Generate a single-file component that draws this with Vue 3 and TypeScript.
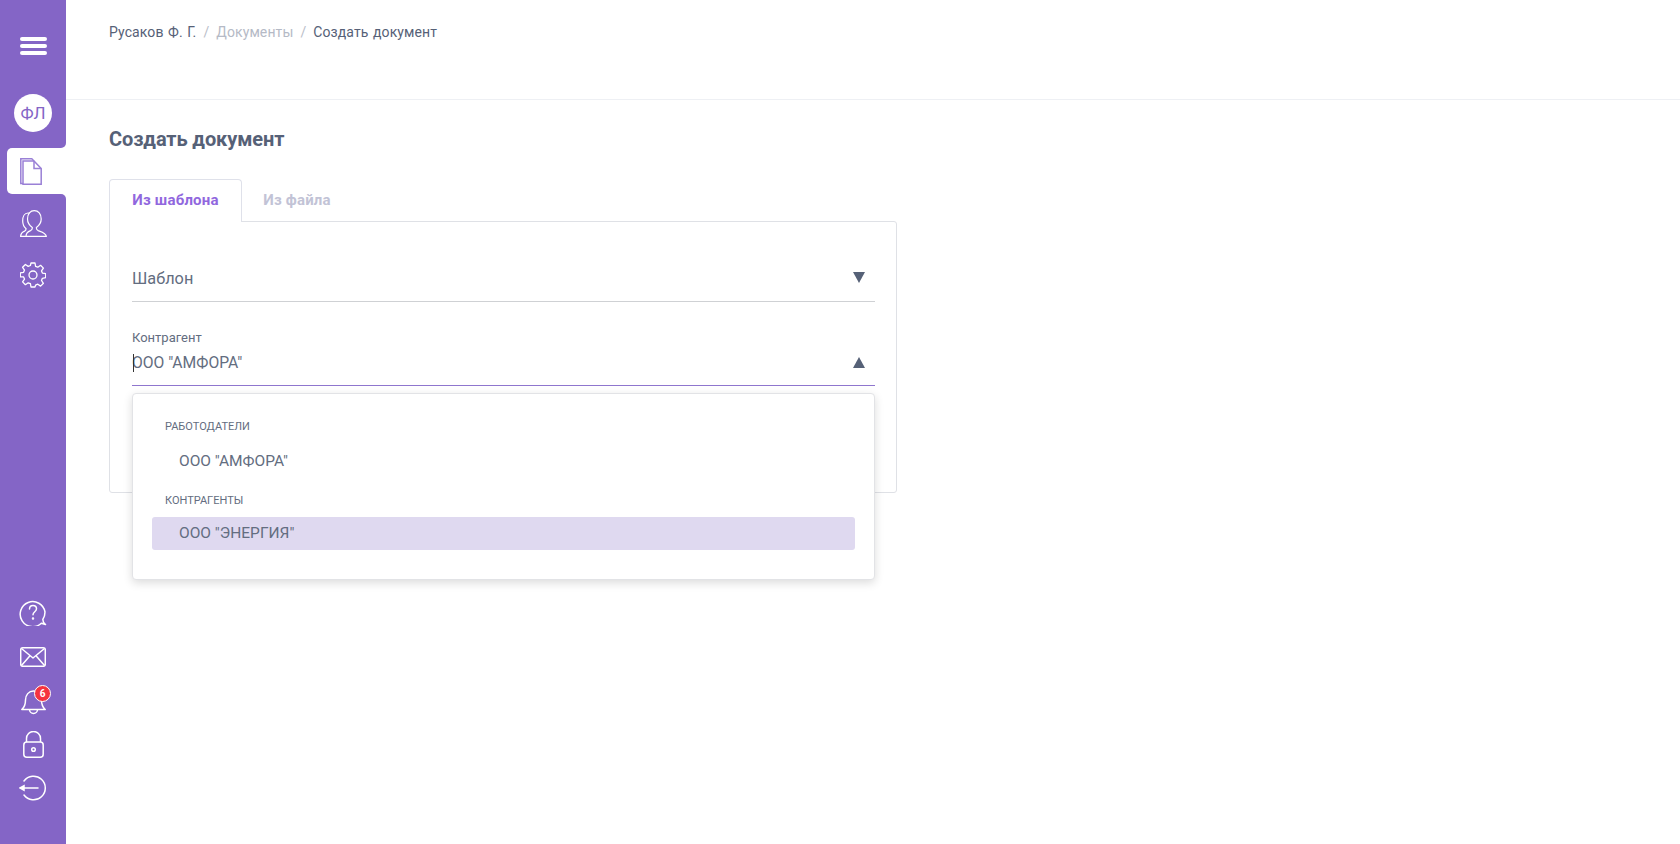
<script setup lang="ts">
const crumbs = [
  { text: 'Русаков Ф. Г.', cls: 'c-dark' },
  { text: 'Документы', cls: 'c-muted' },
  { text: 'Создать документ', cls: 'c-dark' },
]
</script>

<template>
  <div class="page">
    <aside class="side">
      <div class="side-top">
        <div class="burger"><span></span><span></span><span></span></div>
        <div class="avatar">ФЛ</div>
      </div>
      <div class="active-item">
        <svg width="22" height="27" viewBox="0 0 22 27" fill="none" stroke="#9a80d6" stroke-width="1.500">
          <path d="M3 25.400H.8V.8h11l2.200 2.200" />
          <path d="M3 3h11l7.200 7.500v15.700H3z" fill="#fff" />
          <path d="M14 3v7.500h7.200" />
        </svg>
      </div>
      <div class="side-mid">
        <button class="ico">
          <svg width="27" height="27" viewBox="0 0 27 27" fill="none" stroke="#fff" stroke-width="1.200" stroke-linejoin="round">
            <path d="M6 26.400H.6c.2-3 1.800-4.500 4-5.300 1.200-.5 1.500-1.200 1.500-2.300C4 17 2.700 14.500 2.700 11 2.700 6.500 4.500 3 8 3c.5 0 1 .1 1.500.3" />
            <path d="M6 26.400c0-3 1.800-4.800 4.500-5.800 1.500-.6 2-1.700 1.800-3.100C9.500 15.500 7.500 13 7.500 9 7.500 4 10.300.7 14.300.7S21.200 4 21.200 9c0 4-2 6.500-4.800 8.500-.2 1.400.3 2.500 1.800 3.100 3.500 1.300 7.600 2.300 8.200 5.800z" />
          </svg>
        </button>
        <button class="ico">
          <svg width="26" height="26" viewBox="0 0 26 26" fill="none" stroke="#fff" stroke-width="1.300" stroke-linejoin="round">
            <path d="M11 1h4l.6 3.300 2.200.9 2.800-1.900 2.800 2.800-1.900 2.800.9 2.200 3.300.6v4l-3.300.6-.9 2.200 1.900 2.800-2.800 2.800-2.800-1.900-2.200.9L15 25h-4l-.6-3.300-2.200-.9-2.800 1.900-2.800-2.800 1.900-2.800-.9-2.200L.3 14.900v-4l3.300-.6.9-2.200-1.900-2.800 2.800-2.800 2.800 1.900 2.200-.9z" />
            <circle cx="13" cy="13" r="4" />
          </svg>
        </button>
      </div>
      <div class="side-bottom">
        <button class="ico">
          <svg width="28" height="28" viewBox="0 0 28 28" fill="none" stroke="#fff" stroke-width="1.500" stroke-linecap="round" stroke-linejoin="round">
            <path d="M26.500 26.500l-4.200-1.300A12.500 12.500 0 1 1 26 14c0 3-.8 5.500-2.200 7.500 0 2 .8 3.500 2.700 5z" />
            <path d="M10.500 11c0-2 1.500-3.500 3.500-3.500s3.500 1.500 3.500 3.300c0 3-3.500 3-3.500 6" />
            <circle cx="14" cy="20.500" r=".5" fill="#fff" />
          </svg>
        </button>
        <button class="ico">
          <svg width="26" height="22" viewBox="0 -2 26 22" fill="none" stroke="#fff" stroke-width="1.500" stroke-linejoin="round">
            <rect x=".7" y=".7" width="24.600" height="18.600" rx="2" />
            <path d="M1.500 1.500L13 11 24.500 1.500M1.500 18.500L10 8.800M24.500 18.500L16 8.800" />
          </svg>
        </button>
        <button class="ico">
          <svg width="25" height="29" viewBox="0 0 25 29" fill="none" stroke="#fff" stroke-width="1.500" stroke-linejoin="round">
            <path d="M.8 23.500c3-2.500 3.700-5 3.700-9.500 0-5 3.200-9 8-9s8 4 8 9c0 4.500.7 7 3.700 9.500z" />
            <path d="M8.500 23.500a4 4 0 0 0 8 0" />
          </svg>
          <span class="badge">6</span>
        </button>
        <button class="ico">
          <svg width="21" height="27" viewBox="0 0 21 27" fill="none" stroke="#fff" stroke-width="1.500" stroke-linejoin="round">
            <rect x=".8" y="11" width="19.400" height="15.200" rx="3" />
            <path d="M3.500 11V7.500a7 7 0 0 1 14 0V11" />
            <circle cx="10.500" cy="18.500" r="1.800" />
          </svg>
        </button>
        <button class="ico">
          <svg width="28" height="26" viewBox="0 0 28 26" fill="none" stroke="#fff" stroke-width="1.500" stroke-linecap="round">
            <path d="M5 6A11.800 11.800 0 1 1 5 20" />
            <path d="M1.500 13H19" />
            <path d="M1 13l4-2.300v4.600z" fill="#fff" />
          </svg>
        </button>
      </div>
    </aside>

    <main class="main">
      <header class="head">
        <nav class="crumbs">
          <template v-for="(c, i) in crumbs" :key="c.text">
            <span v-if="i > 0" class="sep">/</span>
            <span :class="c.cls">{{ c.text }}</span>
          </template>
        </nav>
      </header>
      <section class="body">
        <h1 class="title">Создать документ</h1>
        <div class="tabs">
          <div class="tab on">Из шаблона</div>
          <div class="tab">Из файла</div>
        </div>
        <div class="panel">
          <div class="field first">
            <span class="val big">Шаблон</span>
            <i class="tri down"></i>
          </div>
          <div class="field second">
            <label class="lab">Контрагент</label>
            <div class="row">
              <span class="val"><span class="caret"></span>ООО "АМФОРА"</span>
              <i class="tri up"></i>
            </div>
          </div>
          <div class="menu">
            <div class="grp">Работодатели</div>
            <div class="opt">ООО "АМФОРА"</div>
            <div class="grp g2">Контрагенты</div>
            <div class="opt sel">ООО "ЭНЕРГИЯ"</div>
          </div>
        </div>
      </section>
    </main>
  </div>
</template>

<style>
html, body { margin: 0; background: #fff; }
</style>

<style scoped>
.page {
  display: flex;
  height: 844px;
  overflow: hidden;
  font-family: Roboto, "Noto Sans", sans-serif;
  color: #566177;
  background: #fff;
}
.side {
  width: 66px;
  flex: none;
  display: flex;
  flex-direction: column;
  background: linear-gradient(#8465c6, #8465c6) left / 20px 100% no-repeat;
}
.side-top {
  height: 148px;
  box-sizing: border-box;
  background: #8465c6;
  border-bottom-right-radius: 5px;
  display: flex;
  flex-direction: column;
  align-items: center;
  padding-top: 37px;
}
.burger { display: flex; flex-direction: column; gap: 3px; }
.burger span { display: block; width: 27px; height: 4px; border-radius: 2px; background: #fff; }
.avatar {
  margin-top: 39px;
  width: 38px;
  height: 38px;
  border-radius: 50%;
  background: #fff;
  color: #8465c6;
  font-size: 17px;
  line-height: 38px;
  text-align: center;
}
.active-item {
  height: 46px;
  margin-left: 7px;
  background: #fff;
  border-radius: 5px 0 0 5px;
  display: flex;
  align-items: center;
  padding-left: 13px;
}
.side-mid {
  background: #8465c6;
  border-top-right-radius: 5px;
  display: flex;
  flex-direction: column;
  align-items: center;
  padding-top: 15px;
  gap: 24px;
}
.side-bottom {
  flex: 1;
  background: #8465c6;
  display: flex;
  flex-direction: column;
  align-items: center;
  justify-content: flex-end;
  padding-bottom: 42px;
  gap: 16px;
}
.ico {
  all: unset;
  display: flex;
  align-items: center;
  justify-content: center;
  height: 28px;
  width: 30px;
  position: relative;
}
.badge {
  position: absolute;
  top: -1px;
  right: -3px;
  width: 15px;
  height: 15px;
  border: 1.500px solid #fff;
  border-radius: 50%;
  background: #f5333f;
  color: #fff;
  font-size: 10px;
  font-weight: 700;
  line-height: 15px;
  text-align: center;
}
.main { flex: 1; min-width: 0; }
.head {
  height: 100px;
  box-sizing: border-box;
  border-bottom: 1px solid #eef0f4;
  padding: 23px 0 0 43px;
}
.crumbs { display: flex; font-size: 14px; line-height: 18px; letter-spacing: 0.1px; word-spacing: 1px; }
.sep { color: #b9bec9; margin: 0 7px; }
.c-dark { color: #566177; }
.c-muted { color: #b5bac6; }
.body { padding: 27px 0 0 43px; }
.title {
  margin: 0 0 28px;
  font-size: 20px;
  line-height: 24px;
  font-weight: 700;
  letter-spacing: -0.1px;
  color: #566177;
}
.tabs { display: flex; height: 43px; position: relative; z-index: 1; }
.tab {
  box-sizing: border-box;
  font-size: 15px;
  font-weight: 700;
  letter-spacing: 0.2px;
  line-height: 43px;
  text-align: center;
  color: #c2c3d6;
  width: 110px;
}
.tab.on {
  width: 133px;
  line-height: 41px;
  color: #9167de;
  background: #fff;
  border: 1px solid #dfe1ea;
  border-bottom: 0;
  border-radius: 4px 4px 0 0;
}
.panel {
  width: 788px;
  height: 272px;
  box-sizing: border-box;
  margin-top: -1px;
  border: 1px solid #dfe1e6;
  border-radius: 0 3px 3px 3px;
  padding: 0 21px 0 22px;
  position: relative;
}
.field.first {
  height: 80px;
  box-sizing: border-box;
  border-bottom: 1px solid #cfd1d4;
  display: flex;
  justify-content: space-between;
  align-items: center;
  padding: 34px 10px 0 0;
}
.field.second {
  height: 84px;
  box-sizing: border-box;
  border-bottom: 1px solid #8f76ce;
  padding-top: 28px;
}
.lab { display: block; font-size: 13px; line-height: 16px; color: #636d80; }
.row {
  display: flex;
  justify-content: space-between;
  align-items: center;
  padding: 5px 10px 0 0;
}
.val { font-size: 15.700px; line-height: 24px; color: #636d80; position: relative; }
.val.big { font-size: 16.300px; }
.caret {
  position: absolute;
  left: 1px;
  top: 3px;
  width: 1px;
  height: 18px;
  background: #333;
}
.tri { display: block; width: 0; height: 0; border-left: 6.500px solid transparent; border-right: 6.500px solid transparent; }
.tri.down { border-top: 11px solid #566177; margin-top: -2px; }
.tri.up { border-bottom: 11px solid #566177; margin-top: -2px; }
.menu {
  position: absolute;
  left: 22px;
  top: 171px;
  width: 743px;
  height: 187px;
  box-sizing: border-box;
  background: #fff;
  border: 1px solid #e2e3e6;
  border-radius: 4px;
  box-shadow: 0 3px 10px rgba(0, 0, 0, 0.14);
  padding: 25px 19px 0;
}
.grp {
  font-size: 11px;
  line-height: 16px;
  text-transform: uppercase;
  color: #636d80;
  padding-left: 13px;
}
.grp.g2 { margin-top: 15px; }
.opt {
  height: 33px;
  margin-top: 10px;
  padding-left: 27px;
  font-size: 15.500px;
  line-height: 33px;
  color: #636d80;
  border-radius: 3px;
}
.opt.sel { background: #dfd9f0; margin-top: 8px; }
</style>
